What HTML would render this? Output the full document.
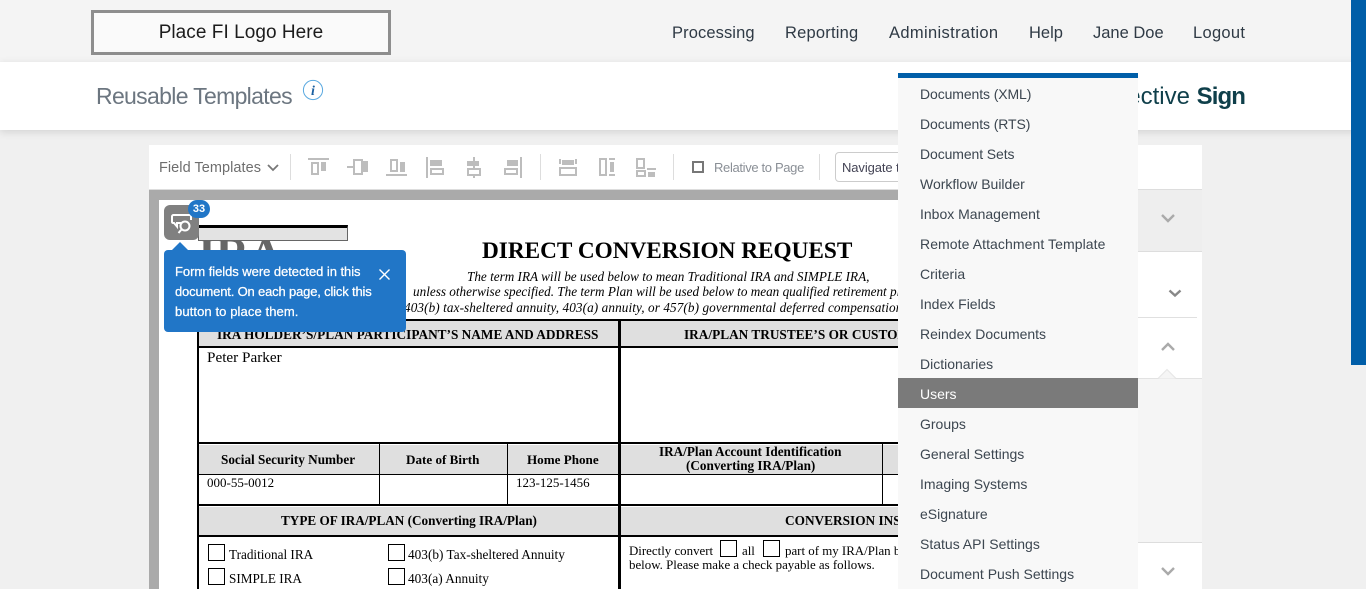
<!DOCTYPE html>
<html><head><meta charset="utf-8"><title>Reusable Templates</title>
<style>
html,body{margin:0;padding:0}
body{width:1366px;height:589px;overflow:hidden;position:relative;background:#f0f0f0;font-family:"Liberation Sans",sans-serif}
.a{position:absolute}
.t{position:absolute;white-space:nowrap;line-height:20px}
.s{font-family:"Liberation Serif",serif;color:#000}
.b{font-weight:bold}
.nav{font-size:16.5px;color:#2f3a45;top:23px}
.m{left:22px;font-size:14px;color:#3c4650}
.g{background:#dfdfdf;position:absolute}
.k{background:#000;position:absolute}
.cb{position:absolute;border:1px solid #000;background:#fff;box-sizing:border-box}
.sep{position:absolute;top:154px;width:1px;height:26px;background:#ddd}
.pop{left:175px;font-size:13px;color:#fff;-webkit-text-stroke:.25px #fff}
</style></head><body>

<div class="a" style="left:0;top:0;width:1366px;height:62px;background:#f4f4f4"></div>
<div class="a" style="left:91px;top:10px;width:300px;height:45px;box-sizing:border-box;border:3px solid #8e8e8e;background:#fafafa"></div>
<div class="t" style="left:91px;width:300px;text-align:center;top:23px;font-size:19px;color:#1c1c1c;letter-spacing:.05px">Place FI Logo Here</div>
<div class="t nav" style="left:672px;letter-spacing:.1px">Processing</div>
<div class="t nav" style="left:785px;letter-spacing:.2px">Reporting</div>
<div class="t nav" style="left:889px;letter-spacing:.35px">Administration</div>
<div class="t nav" style="left:1029px">Help</div>
<div class="t nav" style="left:1093px">Jane Doe</div>
<div class="t nav" style="left:1193px;letter-spacing:.3px">Logout</div>

<div class="a" style="left:0;top:62px;width:1366px;height:68px;background:#fff;box-shadow:0 2px 8px rgba(0,0,0,.13)"></div>
<div class="t" style="left:96px;top:86px;font-size:23px;color:#6c7680;letter-spacing:-.67px">Reusable Templates</div>
<svg class="a" style="left:302px;top:79px" width="22" height="22"><circle cx="11" cy="11" r="9.6" fill="#fff" stroke="#5aa9e0" stroke-width="1"/><text x="11" y="16" text-anchor="middle" font-family="Liberation Serif" font-style="italic" font-weight="bold" font-size="14" fill="#1a5fa0">i</text></svg>
<div class="t" style="right:121px;top:87px;font-size:24px;color:#0f3f4a">ective <b style="letter-spacing:-.9px">Sign</b></div>

<!-- main panel -->
<div class="a" style="left:149px;top:145px;width:1053px;height:45px;background:#fff;border-bottom:1px solid #ddd;box-sizing:border-box"></div>
<div class="a" style="left:149px;top:190px;width:989px;height:399px;background:#aaa"></div>
<div class="a" style="left:159px;top:200px;width:979px;height:389px;background:#fff"></div>

<!-- right column -->
<div class="a" style="left:1138px;top:189px;width:64px;height:63px;background:#eee;border-top:1px solid #ddd;border-bottom:1px solid #ddd;box-sizing:border-box"></div>
<div class="a" style="left:1138px;top:252px;width:64px;height:127px;background:#fff"></div>
<div class="a" style="left:1138px;top:317px;width:59px;height:1px;background:#e0e0e0"></div>
<div class="a" style="left:1138px;top:378px;width:64px;height:165px;background:#f5f5f5;border-top:1px solid #e2e2e2;border-bottom:1px solid #ddd;box-sizing:border-box"></div>
<div class="a" style="left:1138px;top:543px;width:64px;height:46px;background:#fff"></div>
<svg class="a" style="left:1138px;top:189px" width="64" height="400" fill="none" stroke-width="2.4">
<path d="M24 26l6 6 6-6" stroke="#aaa"/>
<path d="M31.500 101.500l5.500 5 5.500-5" stroke="#888"/>
<path d="M24 161l6-6 6 6" stroke="#aaa"/>
<path d="M20 189.500l9-9 9 9" stroke="#e6e6e6" stroke-width="1" fill="#f5f5f5"/>
<path d="M24 379l6 6 6-6" stroke="#aaa"/>
</svg>

<!-- toolbar -->
<div class="t" style="left:159px;top:158px;font-size:14.500px;color:#6e6e6e;letter-spacing:.05px">Field Templates</div>
<svg class="a" style="left:266px;top:163px" width="14" height="10" fill="none"><path d="M2 2l5 5 5-5" stroke="#777" stroke-width="1.800"/></svg>
<div class="sep" style="left:290px"></div>
<div class="sep" style="left:540px"></div>
<div class="sep" style="left:673px"></div>
<div class="sep" style="left:819px"></div>
<svg class="a" style="left:300px;top:150px" width="370" height="36" fill="#bdbdbd" stroke="none">
<!-- 1 --><rect x="8" y="8" width="21" height="2"/><path fill-rule="evenodd" d="M11 12h8v13h-8zM13 14v9h4v-9z"/><rect x="21" y="12" width="5" height="9"/>
<!-- 2 --><rect x="47" y="16" width="21" height="2"/><rect x="54" y="10" width="8" height="14" fill="#fff" stroke="#bdbdbd" stroke-width="2"/><rect x="63" y="11" width="5" height="11"/>
<!-- 3 --><rect x="86" y="24" width="21" height="2"/><path fill-rule="evenodd" d="M90 9h8v13h-8zM92 11v9h4v-9z"/><rect x="100" y="12" width="5" height="10"/>
<!-- 4 --><rect x="126" y="7" width="2" height="21"/><rect x="130" y="10" width="12" height="6"/><path fill-rule="evenodd" d="M130 18h14v7h-14zM132 20v3h10v-3z"/>
<!-- 5 --><rect x="173" y="7" width="2" height="21"/><rect x="167" y="11" width="12" height="5"/><rect x="168" y="19" width="12" height="6" fill="#fff" stroke="#bdbdbd" stroke-width="2"/>
<!-- 6 --><rect x="220" y="7" width="2" height="21"/><rect x="207" y="10" width="11" height="6"/><path fill-rule="evenodd" d="M204 18h14v7h-14zM206 20v3h10v-3z"/>
<!-- 7 --><rect x="259" y="9" width="2" height="5"/><rect x="275" y="9" width="2" height="5"/><rect x="262" y="10" width="12" height="5"/><path fill-rule="evenodd" d="M259 17h18v9h-18zM261 19v5h14v-5z"/>
<!-- 8 --><path fill-rule="evenodd" d="M299 8h8v18h-8zM301 10v14h4v-14z"/><rect x="309" y="8" width="6" height="2"/><rect x="309" y="24" width="6" height="2"/><rect x="310" y="12" width="4" height="10"/>
<!-- 9 --><path fill-rule="evenodd" d="M336 8h9v11h-9zM338 10v7h5v-7z"/><rect x="347" y="18" width="9" height="2"/><path fill-rule="evenodd" d="M336 20h10v7h-10zM338 22v3h6v-3z"/><rect x="348" y="22" width="7" height="5"/>
</svg>
<div class="a" style="left:692px;top:161px;width:12px;height:12px;box-sizing:border-box;border:2px solid #777;background:#fff"></div>
<div class="t" style="left:714px;top:158px;font-size:13px;color:#8a8f96;letter-spacing:-.34px">Relative to Page</div>
<div class="a" style="left:835px;top:152px;width:120px;height:30px;box-sizing:border-box;border:1px solid #ccc;border-radius:4px;background:#fff"></div>
<div class="t" style="left:842px;top:158px;font-size:13px;color:#445;letter-spacing:-.1px">Navigate to</div>

<!-- document -->
<div class="t s b" style="left:198px;top:224px;font-size:46px;line-height:60px;color:#666">IRA</div>
<div class="a" style="left:198px;top:225px;width:150px;height:16px;box-sizing:border-box;background:#e3e3e3;border:1px solid #666;border-top:3px solid #000"></div>
<div class="t s b" style="left:482px;top:241px;font-size:23.250px">DIRECT CONVERSION REQUEST</div>
<div class="t s" style="left:467px;top:267px;font-size:13.200px;font-style:italic">The term IRA will be used below to mean Traditional IRA and SIMPLE IRA,</div>
<div class="t s" style="left:413px;top:282px;font-size:13.200px;font-style:italic">unless otherwise specified. The term Plan will be used below to mean qualified retirement plan</div>
<div class="t s" style="left:404px;top:298px;font-size:13.200px;font-style:italic;letter-spacing:.1px">403(b) tax-sheltered annuity, 403(a) annuity, or 457(b) governmental deferred compensation</div>

<!-- table fills -->
<div class="g" style="left:199px;top:321px;width:939px;height:26px"></div>
<div class="g" style="left:199px;top:445px;width:939px;height:29px"></div>
<div class="g" style="left:199px;top:507px;width:939px;height:28px"></div>
<!-- table lines -->
<div class="k" style="left:197px;top:319px;width:941px;height:2px"></div>
<div class="k" style="left:197px;top:346px;width:941px;height:2px"></div>
<div class="k" style="left:197px;top:442px;width:941px;height:2px"></div>
<div class="k" style="left:197px;top:474px;width:941px;height:1px"></div>
<div class="k" style="left:197px;top:504px;width:941px;height:2px"></div>
<div class="k" style="left:197px;top:535px;width:941px;height:2px"></div>
<div class="k" style="left:197px;top:319px;width:2px;height:270px"></div>
<div class="k" style="left:618px;top:319px;width:3px;height:270px"></div>
<div class="k" style="left:379px;top:444px;width:1px;height:61px"></div>
<div class="k" style="left:507px;top:444px;width:1px;height:61px"></div>
<div class="k" style="left:882px;top:444px;width:1px;height:61px"></div>

<div class="t s b" style="left:217px;top:325px;font-size:13.300px">IRA HOLDER’S/PLAN PARTICIPANT’S NAME AND ADDRESS</div>
<div class="t s b" style="left:684px;top:325px;font-size:13.300px">IRA/PLAN TRUSTEE’S OR CUSTODIAN</div>
<div class="t s" style="left:207px;top:348px;font-size:15.200px">Peter Parker</div>
<div class="t s b" style="left:221px;top:450px;font-size:13.200px">Social Security Number</div>
<div class="t s b" style="left:406px;top:450px;font-size:13.100px">Date of Birth</div>
<div class="t s b" style="left:527px;top:450px;font-size:13.100px">Home Phone</div>
<div class="t s b" style="left:659px;top:442px;font-size:13.200px">IRA/Plan Account Identification</div>
<div class="t s b" style="left:686px;top:456px;font-size:13.200px">(Converting IRA/Plan)</div>
<div class="t s" style="left:207px;top:473px;font-size:13px">000-55-0012</div>
<div class="t s" style="left:516px;top:473px;font-size:13px">123-125-1456</div>
<div class="t s b" style="left:281px;top:511px;font-size:13.200px">TYPE OF IRA/PLAN (Converting IRA/Plan)</div>
<div class="t s b" style="left:785px;top:511px;font-size:13.300px">CONVERSION INSTRUCTIONS</div>

<div class="cb" style="left:208px;top:544px;width:17px;height:17px"></div>
<div class="cb" style="left:208px;top:568px;width:17px;height:17px"></div>
<div class="cb" style="left:388px;top:544px;width:17px;height:17px"></div>
<div class="cb" style="left:388px;top:568px;width:17px;height:17px"></div>
<div class="t s" style="left:229px;top:545px;font-size:13.200px">Traditional IRA</div>
<div class="t s" style="left:229px;top:569px;font-size:13.200px">SIMPLE IRA</div>
<div class="t s" style="left:408px;top:545px;font-size:13.300px">403(b) Tax-sheltered Annuity</div>
<div class="t s" style="left:408px;top:569px;font-size:13.300px">403(a) Annuity</div>
<div class="t s" style="left:629px;top:541px;font-size:12.900px">Directly convert</div>
<div class="cb" style="left:720px;top:540px;width:17px;height:17px"></div>
<div class="t s" style="left:742px;top:541px;font-size:12.900px">all</div>
<div class="cb" style="left:763px;top:540px;width:17px;height:17px"></div>
<div class="t s" style="left:785px;top:541px;font-size:12.900px">part of my IRA/Plan balance</div>
<div class="t s" style="left:629px;top:555px;font-size:12.900px">below. Please make a check payable as follows.</div>

<!-- detection button -->
<div class="a" style="left:164px;top:205px;width:35px;height:35px;border-radius:6px;background:#808080"></div>
<svg class="a" style="left:164px;top:205px" width="35" height="35" fill="none" stroke="#fff" stroke-width="2">
<path d="M19 18H13v3.500L10 18H9a1.500 1.500 0 0 1-1-1.500v-5A1.500 1.500 0 0 1 9.500 10h16a1.500 1.500 0 0 1 1.500 1.500V15"/>
<circle cx="21" cy="21" r="4.500" fill="#808080"/><path d="M17.500 24.500L14.500 28"/>
</svg>
<div class="a" style="left:188px;top:200px;width:22px;height:18px;border-radius:9px;background:#2176c7;color:#fff;font-size:11px;font-weight:bold;line-height:18px;text-align:center">33</div>
<!-- popup -->
<div class="a" style="left:172px;top:242px;width:0;height:0;border-left:8px solid transparent;border-right:8px solid transparent;border-bottom:8px solid #2176c7"></div>
<div class="a" style="left:164px;top:250px;width:242px;height:82px;border-radius:4px;background:#2176c7"></div>
<div class="t pop" style="top:262px;letter-spacing:-.05px">Form fields were detected in this</div>
<div class="t pop" style="top:282px;letter-spacing:-.17px">document. On each page, click this</div>
<div class="t pop" style="top:302px;letter-spacing:.1px">button to place them.</div>
<svg class="a" style="left:378px;top:268px" width="13" height="13" fill="none" stroke="#fff" stroke-width="1.400"><path d="M1.500 1.500l10 10M11.500 1.500l-10 10"/></svg>

<!-- dropdown -->
<div class="a" style="left:898px;top:73px;width:240px;height:516px;background:#f8f8f8;border-top:5px solid #005ea8;box-sizing:border-box">
<div class="a" style="left:0;top:300px;width:240px;height:30px;background:#7a7a7a"></div>
<div class="t m" style="top:6px;letter-spacing:-.1px">Documents (XML)</div>
<div class="t m" style="top:36px;letter-spacing:-.1px">Documents (RTS)</div>
<div class="t m" style="top:66px;letter-spacing:-.1px">Document Sets</div>
<div class="t m" style="top:96px">Workflow Builder</div>
<div class="t m" style="top:126px">Inbox Management</div>
<div class="t m" style="top:156px;letter-spacing:.08px">Remote Attachment Template</div>
<div class="t m" style="top:186px">Criteria</div>
<div class="t m" style="top:216px">Index Fields</div>
<div class="t m" style="top:246px">Reindex Documents</div>
<div class="t m" style="top:276px">Dictionaries</div>
<div class="t m" style="top:306px;color:#fff">Users</div>
<div class="t m" style="top:336px">Groups</div>
<div class="t m" style="top:366px">General Settings</div>
<div class="t m" style="top:396px">Imaging Systems</div>
<div class="t m" style="top:426px">eSignature</div>
<div class="t m" style="top:456px">Status API Settings</div>
<div class="t m" style="top:486px">Document Push Settings</div>
</div>

<div class="a" style="left:1351px;top:0;width:15px;height:365px;background:#005ea8"></div>
</body></html>
